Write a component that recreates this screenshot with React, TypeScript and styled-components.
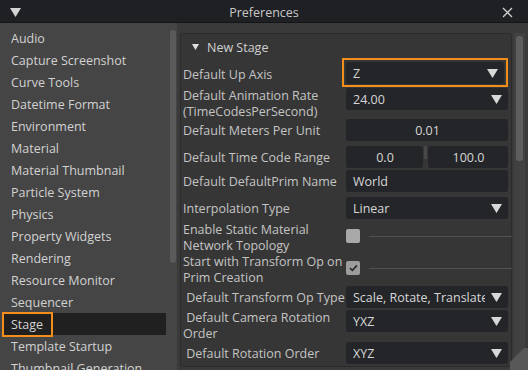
import React from 'react';
import styled, { createGlobalStyle } from 'styled-components';

const GlobalStyle = createGlobalStyle`
  html, body {
    margin: 0;
    padding: 0;
    background: #454545;
    overflow: hidden;
  }
  body {
    font-family: "Open Sans", "Noto Sans", sans-serif;
    font-size: 12.5px;
  }
`;

const Window = styled.div`
  position: relative;
  width: 528px;
  height: 370px;
  display: flex;
  flex-direction: column;
  overflow: hidden;
  background: #454545;
`;

const TitleBar = styled.div`
  height: 22px;
  flex: none;
  display: grid;
  grid-template-columns: 40px 1fr 40px;
  align-items: center;
  background: #1f2023;
  border-bottom: 1px solid #151517;
`;

const Title = styled.div`
  text-align: center;
  color: #c8c8c8;
  font-size: 12.5px;
  line-height: 22px;
  padding-top: 2px;
`;

const Body = styled.div`
  flex: 1;
  min-height: 0;
  display: flex;
`;

const Sidebar = styled.div`
  width: 170px;
  flex: none;
  padding-top: 4px;
  display: flex;
  flex-direction: column;
`;

const SideItem = styled.div<{ $selected?: boolean }>`
  position: relative;
  height: 22px;
  flex: none;
  box-sizing: border-box;
  margin-left: 3px;
  margin-right: 4px;
  padding: 1px 0 0 8px;
  line-height: 22px;
  color: #d2d2d2;
  white-space: nowrap;
  background: ${(p) => (p.$selected ? '#202020' : 'transparent')};
`;

const Highlight = styled.div`
  position: absolute;
  left: -1px;
  top: -1px;
  width: 51px;
  height: 25px;
  box-sizing: border-box;
  border: 2px solid #f18e1c;
`;

const SideScroll = styled.div`
  width: 6px;
  flex: none;
  margin-right: 1px;
  padding-top: 7px;
`;

const Grip = styled.div<{ $h: number; $w: number }>`
  width: ${(p) => p.$w}px;
  height: ${(p) => p.$h}px;
  background: #5a5a5a;
  border-radius: 3px;
`;

const Panel = styled.div`
  flex: 1;
  display: flex;
  align-items: flex-start;
  background: #3a3a3a;
  padding: 10px 0 0 3px;
`;

const Group = styled.div`
  width: 332px;
  height: 334px;
  box-sizing: border-box;
  flex: none;
  background: #363636;
  border: 1px solid #2b2b2b;
  border-radius: 3px;
  padding-left: 2px;
  display: flex;
  flex-direction: column;
`;

const Header = styled.div`
  height: 26px;
  flex: none;
  display: flex;
  align-items: center;
  padding-left: 9px;
  gap: 8px;
  color: #d0d0d0;
`;

const PanelScroll = styled.div`
  width: 11px;
  height: 337px;
  margin-left: 2px;
  padding: 3px 0 0 2px;
  box-sizing: border-box;
  background: #414141;
`;

const Row = styled.div<{ $h: number }>`
  height: ${(p) => p.$h}px;
  flex: none;
  display: flex;
  align-items: flex-start;
`;

const Label = styled.div<{ $mt: number }>`
  width: 163px;
  flex: none;
  margin-top: ${(p) => p.$mt + 1}px;
  line-height: 16px;
  color: #c4c4c4;
  white-space: pre;
  overflow: hidden;
`;

const Value = styled.div<{ $mt: number; $w?: number }>`
  width: ${(p) => p.$w ?? 162}px;
  flex: none;
  margin-top: ${(p) => p.$mt}px;
  display: flex;
  align-items: center;
`;

const Focus = styled.div`
  width: 170px;
  margin-left: -4px;
  box-sizing: border-box;
  border: 2px solid #f18e1c;
  padding: 2px 2px 1px 2px;
`;

const Field = styled.div<{ $center?: boolean }>`
  flex: 1;
  min-width: 0;
  height: 22px;
  box-sizing: border-box;
  display: flex;
  align-items: center;
  justify-content: ${(p) => (p.$center ? 'center' : 'flex-start')};
  padding: 0 6px 0 7px;
  background: #242528;
  border-radius: 3px;
  color: #d6d6d6;
  white-space: nowrap;
`;

const ComboText = styled.span`
  flex: 1;
  min-width: 0;
  margin-right: 6px;
  overflow: hidden;
`;

const Splitter = styled.div`
  width: 3px;
  height: 13px;
  margin: 0 1px;
  align-self: flex-start;
  background: #484848;
`;

const Check = styled.div<{ $on?: boolean }>`
  width: 14px;
  height: 14px;
  flex: none;
  border-radius: 2px;
  background: ${(p) => (p.$on ? '#9c9c9c' : '#a8a8a8')};
  display: flex;
  align-items: center;
  justify-content: center;
`;

const Rule = styled.div`
  flex: 1;
  height: 1px;
  margin-left: 9px;
  background: #515151;
`;

const Corner = styled.svg`
  position: absolute;
  right: 0;
  bottom: 0;
`;

const Tri = ({ w, h, color = '#d8d8d8' }: { w: number; h: number; color?: string }) => (
  <svg width={w} height={h} viewBox={`0 0 ${w} ${h}`} style={{ flex: 'none' }}>
    <polygon points={`0,0 ${w},0 ${w / 2},${h}`} fill={color} />
  </svg>
);

const Combo = ({ text }: { text: string }) => (
  <Field>
    <ComboText>{text}</ComboText>
    <Tri w={11} h={9} />
  </Field>
);

const sideItems = [
  'Audio',
  'Capture Screenshot',
  'Curve Tools',
  'Datetime Format',
  'Environment',
  'Material',
  'Material Thumbnail',
  'Particle System',
  'Physics',
  'Property Widgets',
  'Rendering',
  'Resource Monitor',
  'Sequencer',
  'Stage',
  'Template Startup',
  'Thumbnail Generation',
];

const App: React.FC = () => {
  return (
    <Window>
      <GlobalStyle />
      <TitleBar>
        <div style={{ paddingLeft: 10, display: 'flex' }}>
          <Tri w={11} h={9} color="#d4d4d4" />
        </div>
        <Title>Preferences</Title>
        <svg width={11} height={11} viewBox="0 0 11 11" style={{ marginLeft: 14 }}>
          <path d="M1 1L10 10M10 1L1 10" stroke="#d0d0d0" strokeWidth={1.3} />
        </svg>
      </TitleBar>

      <Body>
        <Sidebar>
          {sideItems.map((name) => (
            <SideItem key={name} $selected={name === 'Stage'}>
              {name}
              {name === 'Stage' && <Highlight />}
            </SideItem>
          ))}
        </Sidebar>
        <SideScroll>
          <Grip $w={6} $h={233} />
        </SideScroll>

        <Panel>
          <Group>
            <Header>
              <Tri w={7} h={6} color="#e0e0e0" />
              New Stage
            </Header>

            <Row $h={28}>
              <Label $mt={6}>Default Up Axis</Label>
              <Value $mt={-2}>
                <Focus>
                  <Combo text="Z" />
                </Focus>
              </Value>
            </Row>

            <Row $h={30}>
              <Label $mt={-1}>{'Default Animation Rate\n(TimeCodesPerSecond)'}</Label>
              <Value $mt={0}>
                <Combo text="24.00" />
              </Value>
            </Row>

            <Row $h={26}>
              <Label $mt={4}>Default Meters Per Unit</Label>
              <Value $mt={1}>
                <Field $center>0.01</Field>
              </Value>
            </Row>

            <Row $h={25}>
              <Label $mt={5}>Default Time Code Range</Label>
              <Value $mt={2}>
                <Field $center style={{ flex: '0 0 77px' }}>0.0</Field>
                <Splitter />
                <Field $center>100.0</Field>
              </Value>
            </Row>

            <Row $h={25}>
              <Label $mt={4}>Default DefaultPrim Name</Label>
              <Value $mt={1}>
                <Field>World</Field>
              </Value>
            </Row>

            <Row $h={26}>
              <Label $mt={6}>Interpolation Type</Label>
              <Value $mt={3}>
                <Combo text="Linear" />
              </Value>
            </Row>

            <Row $h={33}>
              <Label $mt={1}>{'Enable Static Material\nNetwork Topology'}</Label>
              <Value $mt={9} $w={166}>
                <Check />
                <Rule />
              </Value>
            </Row>

            <Row $h={31}>
              <Label $mt={0}>{'Start with Transform Op on\nPrim Creation'}</Label>
              <Value $mt={8} $w={166}>
                <Check $on>
                  <svg width={9} height={8} viewBox="0 0 9 8">
                    <path d="M1 4.2L3.4 6.4L8 1.4" stroke="#2a2a2a" strokeWidth={1.6} fill="none" />
                  </svg>
                </Check>
                <Rule />
              </Value>
            </Row>

            <Row $h={24}>
              <Label $mt={5}>{'\u00a0Default Transform Op Type'}</Label>
              <Value $mt={2}>
                <Combo text="Scale, Rotate, Translate" />
              </Value>
            </Row>

            <Row $h={32}>
              <Label $mt={1}>{'\u00a0Default Camera Rotation\nOrder'}</Label>
              <Value $mt={2}>
                <Combo text="YXZ" />
              </Value>
            </Row>

            <Row $h={26}>
              <Label $mt={5}>{'\u00a0Default Rotation Order'}</Label>
              <Value $mt={2}>
                <Combo text="XYZ" />
              </Value>
            </Row>
          </Group>

          <PanelScroll>
            <Grip $w={7} $h={125} style={{ background: '#5e5e5e' }} />
          </PanelScroll>
        </Panel>
      </Body>

      <Corner width={18} height={22} viewBox="0 0 18 22">
        <polygon points="0,22 0,14 14,0 18,0 18,22" fill="#585858" />
      </Corner>
    </Window>
  );
};

export default App;
